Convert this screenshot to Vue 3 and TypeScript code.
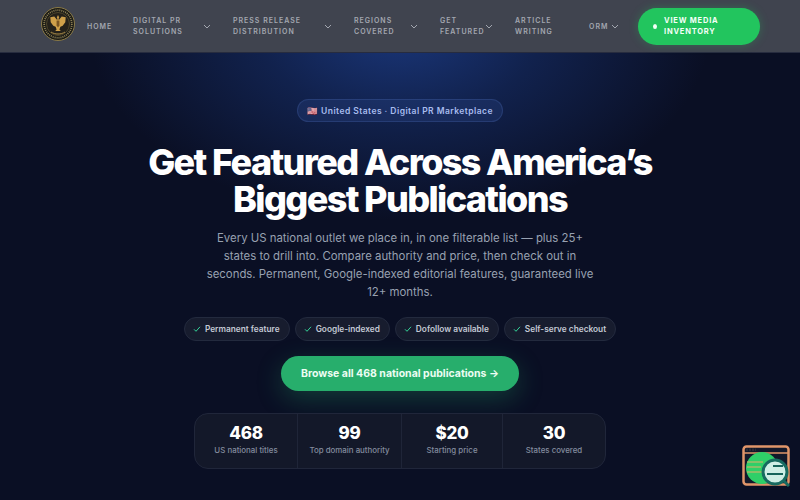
<script setup lang="ts">
interface NavItem { label: string; width: number; caret: boolean }
const nav: NavItem[] = [
  { label: 'HOME', width: 24, caret: false },
  { label: 'DIGITAL PR SOLUTIONS', width: 66, caret: true },
  { label: 'PRESS RELEASE DISTRIBUTION', width: 87, caret: true },
  { label: 'REGIONS COVERED', width: 52, caret: true },
  { label: 'GET FEATURED', width: 41, caret: true },
  { label: 'ARTICLE WRITING', width: 52, caret: false },
  { label: 'ORM', width: 18, caret: true },
]
const chips = ['Permanent feature', 'Google-indexed', 'Dofollow available', 'Self-serve checkout']
const stats = [
  { value: '468', label: 'US national titles', width: 103 },
  { value: '99', label: 'Top domain authority', width: 104 },
  { value: '$20', label: 'Starting price', width: 101 },
  { value: '30', label: 'States covered', width: 102 },
]
</script>

<template>
  <div class="page">
    <header class="header">
      <svg class="logo" viewBox="0 0 34 34" aria-hidden="true">
        <circle cx="17" cy="17" r="16.500" fill="#1b1b16" stroke="#8a7a48" stroke-width="1" />
        <circle cx="17" cy="17" r="13.800" fill="none" stroke="#b5a36a" stroke-width="1.800" stroke-dasharray="1 1" opacity=".75" />
        <circle cx="17" cy="17" r="11.500" fill="#24211a" stroke="#6d5f38" stroke-width=".6" />
        <path d="M17 8l1.300 2.800h-.6v2.400l3-3.600 4 .6-.4 5-2.600 3.600-2.300 1-1 2.700 1.400 1.500h-5.600l1.400-1.500-1-2.700-2.300-1-2.600-3.600-.4-5 4-.6 3 3.600v-2.400h-.6z" fill="#cfa04a" />
        <path d="M15.600 13.500h2.800v5l-1.400 2-1.400-2z" fill="#7a5522" />
        <path d="M10 25c2 1.400 4.500 2 7 2s5-.6 7-2" fill="none" stroke="#a88a48" stroke-width="1" />
      </svg>
      <nav class="nav">
        <a v-for="item in nav" :key="item.label" class="nav-item">
          <span class="nav-label" :style="{ width: item.width + 'px' }">{{ item.label }}</span>
          <svg v-if="item.caret" class="caret" viewBox="0 0 8 5" aria-hidden="true">
            <path d="M1 1l3 3 3-3" fill="none" stroke="currentColor" stroke-width="1" />
          </svg>
        </a>
      </nav>
      <a class="inventory">
        <span class="dot"></span>
        <span>VIEW MEDIA INVENTORY</span>
      </a>
    </header>

    <main class="hero">
      <div class="badge">
        <span class="flag">🇺🇸</span>
        <span>United States · Digital PR Marketplace</span>
      </div>
      <h1>Get Featured Across America’s<br />Biggest Publications</h1>
      <p class="lead">Every US national outlet we place in, in one filterable list — plus 25+ states to drill into. Compare authority and price, then check out in seconds. Permanent, Google-indexed editorial features, guaranteed live 12+ months.</p>
      <ul class="chips">
        <li v-for="chip in chips" :key="chip" class="chip">
          <svg class="check" viewBox="0 0 8 8" aria-hidden="true">
            <path d="M1 4.300l2 2L7 1.800" fill="none" stroke="#34d399" stroke-width="1" />
          </svg>
          {{ chip }}
        </li>
      </ul>
      <a class="cta">Browse all 468 national publications →</a>
      <div class="stats">
        <div v-for="s in stats" :key="s.label" class="stat" :style="{ width: s.width + 'px' }">
          <strong>{{ s.value }}</strong>
          <span>{{ s.label }}</span>
        </div>
      </div>
    </main>

    <svg class="widget" viewBox="0 0 48 42" aria-hidden="true">
      <rect x="1.500" y="1.500" width="45" height="38" rx="3" fill="#13182a" stroke="#e0956a" stroke-width="2.500" />
      <path d="M1.500 8h45" stroke="#e0956a" stroke-width="1.500" />
      <path d="M4 4.800h10" stroke="#2a2a33" stroke-width="2.500" stroke-dasharray="2 1" />
      <circle cx="20" cy="23" r="16" fill="#2fcf68" />
      <path d="M5 17h16M5 22h14M5 27h15" stroke="#d9b36a" stroke-width="1.300" opacity=".7" />
      <circle cx="33" cy="27" r="12" fill="#cfeee6" stroke="#176a60" stroke-width="3" />
      <path d="M31 21h10M25 29h16" stroke="#16635b" stroke-width="1.800" />
      <path d="M42 36l5 5" stroke="#176a60" stroke-width="3" />
    </svg>
  </div>
</template>

<style>
html, body { margin: 0; padding: 0; background: #0a0f24; }
</style>

<style scoped>
.page {
  width: 800px;
  height: 500px;
  overflow: hidden;
  position: relative;
  font-family: Inter, "Liberation Sans", sans-serif;
  background:
    radial-gradient(ellipse 310px 190px at 400px 30px, #1a3679 0%, rgba(23, 49, 111, .55) 45%, rgba(23, 49, 111, 0) 100%),
    #0a0f24;
}
.header {
  height: 53px;
  box-sizing: border-box;
  padding: 0 40px 0 41px;
  display: flex;
  align-items: center;
  background: #40444f;
  border-bottom: 1px solid #272c3f;
}
.logo { width: 34px; height: 34px; flex: none; margin: 0 12px 5px 0; }
.nav { display: flex; align-items: center; gap: 22px; }
.nav-item {
  display: flex;
  align-items: center;
  gap: 4px;
  color: #a3a7b0;
  font-size: 7px;
  font-weight: 600;
  letter-spacing: 1px;
  line-height: 11px;
}
.nav-label { display: block; }
.caret { width: 8px; height: 5px; flex: none; }
.inventory {
  margin-left: auto;
  flex: none;
  width: 122px;
  height: 37px;
  box-sizing: border-box;
  padding: 0 14px 0 15px;
  border-radius: 19px;
  display: flex;
  align-items: center;
  gap: 7px;
  background: #22c55e;
  color: #f4fff8;
  font-size: 7.500px;
  font-weight: 700;
  letter-spacing: .8px;
  line-height: 11px;
  box-shadow: 0 0 10px rgba(34, 197, 94, .3);
}
.dot { width: 4px; height: 5px; border-radius: 50%; background: #f4fff8; flex: none; }
.hero { display: flex; flex-direction: column; align-items: center; padding-top: 46px; }
.badge {
  height: 23px;
  box-sizing: border-box;
  padding: 0 9px;
  display: flex;
  align-items: center;
  gap: 4px;
  border-radius: 12px;
  border: 1px solid rgba(96, 130, 210, .2);
  background: rgba(40, 66, 130, .35);
  color: #a8bcee;
  font-size: 8.500px;
  font-weight: 600;
  letter-spacing: .45px;
}
.flag { width: 10px; font-size: 8.500px; letter-spacing: 0; font-family: "Noto Sans", sans-serif; }
h1 {
  margin: 22px 0 0;
  color: #fff;
  font-size: 36px;
  line-height: 37px;
  font-weight: 800;
  letter-spacing: -1.620px;
  text-align: center;
}
.lead {
  width: 392px;
  margin: 11px 0 0;
  color: #98a1b1;
  font-size: 11.400px;
  line-height: 18px;
  text-align: center;
}
.chips { list-style: none; margin: 16px 0 0; padding: 0; display: flex; gap: 5px; }
.chip {
  height: 24px;
  box-sizing: border-box;
  padding: 0 9px 0 8px;
  display: flex;
  align-items: center;
  gap: 4px;
  border-radius: 12px;
  border: 1px solid #232a3e;
  background: #171c2e;
  color: #c3c9d4;
  font-size: 8.300px;
  font-weight: 600;
}
.check { width: 8px; height: 8px; }
.cta {
  margin-top: 15px;
  width: 238px;
  height: 35px;
  border-radius: 18px;
  display: flex;
  align-items: center;
  justify-content: center;
  background: #27ae6c;
  color: #ecfdf3;
  font-size: 10.500px;
  font-weight: 700;
  box-shadow: 0 8px 26px rgba(39, 174, 108, .28);
}
.stats {
  margin-top: 22px;
  height: 56px;
  box-sizing: border-box;
  display: flex;
  border-radius: 14px;
  border: 1px solid #20263a;
  background: #131829;
}
.stat {
  box-sizing: border-box;
  padding-top: 9px;
  display: flex;
  flex-direction: column;
  align-items: center;
  border-right: 1px solid #1f2538;
}
.stat:last-child { border-right: 0; }
.stat strong { color: #fff; font-size: 17px; line-height: 20px; font-weight: 800; letter-spacing: -.3px; }
.stat span { margin-top: 1px; color: #838c9e; font-size: 7.900px; line-height: 12px; font-weight: 500; }
.widget { position: absolute; left: 742px; top: 445px; width: 48px; height: 42px; }
</style>
